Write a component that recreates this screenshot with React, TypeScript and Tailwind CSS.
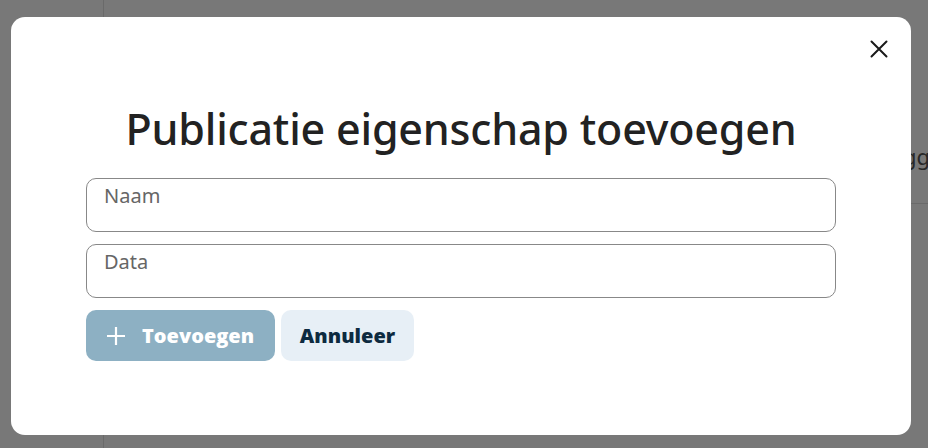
import React, { useState } from 'react';

// Modal: add a publication property (naam + data), shown over the page.
export default function App() {
  const [naam, setNaam] = useState('');
  const [data, setData] = useState('');

  return (
    <div className="relative h-[448px] w-[928px] overflow-hidden bg-white font-['Noto_Sans',sans-serif]">
      {/* page behind the overlay */}
      <div className="flex h-full">
        <aside className="w-[104px] shrink-0 border-r border-[#e2e2e2]" />
        <main className="flex-1">
          <div className="h-[204px] border-b border-[#e2e2e2] flex items-end justify-end pb-[30px] pr-0">
            <span className="text-[22px] text-[#555] translate-x-[2px]">Toevoegg</span>
          </div>
        </main>
      </div>

      {/* overlay */}
      <div className="absolute inset-0 bg-black/[0.53] flex pl-[11px] pt-[17px]">
        <div className="relative w-[900px] h-[418px] rounded-[14px] bg-white flex flex-col items-center pt-[82px]">
          <button type="button" className="absolute right-[19px] top-[19px] p-[4px] text-[#1a1a1a]">
            <svg width="18" height="18" viewBox="0 0 18 18" fill="none" stroke="currentColor" strokeWidth="2" strokeLinecap="round">
              <path d="M1.5 1.5l15 15M16.5 1.5l-15 15" />
            </svg>
          </button>

          <h2 className="text-[43px] leading-[60px] font-medium text-[#222] tracking-[-0.2px]">Publicatie eigenschap toevoegen</h2>

          <div className="mt-[19px] w-[750px] flex flex-col gap-[12px]">
            <label className="block h-[54px] rounded-[10px] border border-[#888] px-[17px] pt-[3px]">
              <span className="block text-[20px] leading-[27px] text-[#666]">Naam</span>
              <input value={naam} onChange={(e) => setNaam(e.target.value)} className="w-full outline-none text-[16px]" />
            </label>
            <label className="block h-[54px] rounded-[10px] border border-[#888] px-[17px] pt-[3px]">
              <span className="block text-[20px] leading-[27px] text-[#666]">Data</span>
              <input value={data} onChange={(e) => setData(e.target.value)} className="w-full outline-none text-[16px]" />
            </label>

            <div className="flex gap-[6px] font-['Open_Sans',sans-serif] font-extrabold">
              <button
                type="button"
                className="h-[51px] w-[189px] rounded-[10px] bg-[#8db0c3] text-white text-[20px] flex items-center pl-[20px] gap-[16px]"
              >
                <svg width="20" height="20" viewBox="0 0 20 20" fill="none" stroke="currentColor" strokeWidth="2.2">
                  <path d="M10 1v18M1 10h18" />
                </svg>
                Toevoegen
              </button>
              <button
                type="button"
                className="h-[51px] w-[133px] rounded-[10px] bg-[#e7eff6] text-[#0d2a40] text-[20px]"
              >
                Annuleer
              </button>
            </div>
          </div>
        </div>
      </div>
    </div>
  );
}
